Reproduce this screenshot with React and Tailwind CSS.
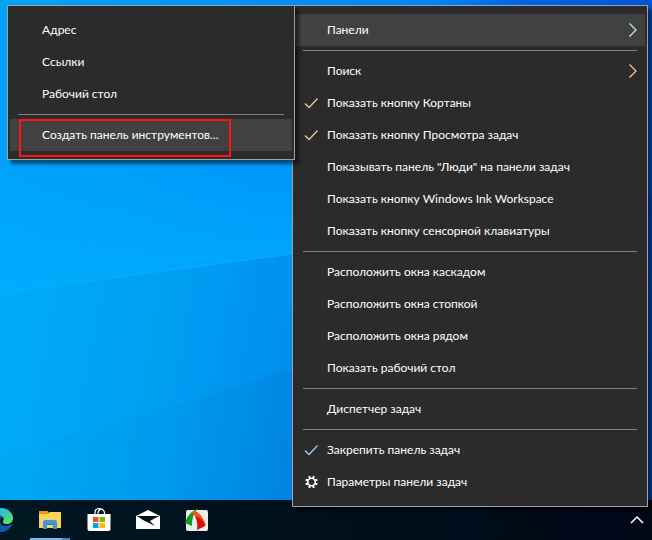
import clsx from 'clsx'

const toolbarItems = [
  { label: 'Адрес' },
  { label: 'Ссылки' },
  { label: 'Рабочий стол' },
  { separator: true },
  { label: 'Создать панель инструментов...', active: true, marked: true },
]

const taskbarItems = [
  { label: 'Панели', arrow: 'cool', active: true },
  { separator: true },
  { label: 'Поиск', arrow: 'warm' },
  { label: 'Показать кнопку Кортаны', icon: 'checkWarm' },
  { label: 'Показать кнопку Просмотра задач', icon: 'checkWarm' },
  { label: 'Показывать панель "Люди" на панели задач' },
  { label: 'Показать кнопку Windows Ink Workspace' },
  { label: 'Показать кнопку сенсорной клавиатуры' },
  { separator: true },
  { label: 'Расположить окна каскадом' },
  { label: 'Расположить окна стопкой' },
  { label: 'Расположить окна рядом' },
  { label: 'Показать рабочий стол' },
  { separator: true },
  { label: 'Диспетчер задач' },
  { separator: true },
  { label: 'Закрепить панель задач', icon: 'checkCool' },
  { label: 'Параметры панели задач', icon: 'gear' },
]

const Check = ({ color }) => (
  <svg className="h-4 w-4" viewBox="0 0 16 16" fill="none" stroke={color} strokeWidth="1.3">
    <path d="M2 8.5l4 4 8.5-9" />
  </svg>
)

const Gear = () => (
  <svg className="h-4 w-4" viewBox="0 0 16 16" fill="none" stroke="#fff">
    <circle cx="8.5" cy="8" r="3.7" strokeWidth="1.6" />
    <g strokeWidth="2">
      {[0, 45, 90, 135, 180, 225, 270, 315].map((angle) => (
        <path key={angle} d="M8.5 1.700v2.300" transform={`rotate(${angle + 22.5} 8.5 8)`} />
      ))}
    </g>
  </svg>
)

const MenuIcon = ({ name }) => {
  if (name === 'checkWarm') return <Check color="#e8cd98" />
  if (name === 'checkCool') return <Check color="#a9c8f2" />
  if (name === 'gear') return <Gear />
  return null
}

const Menu = ({ items, label, className, children }) => (
  <div
    role="menu"
    aria-label={label}
    className={clsx('absolute border border-[#a0a0a0] bg-[#2b2b2b] px-0.5 py-2 shadow-[4px_4px_3px_rgba(0,0,0,0.5)]', className)}
  >
    {items.map((item, index) =>
      item.separator ? (
        <hr key={index} className="mx-2 my-1 border-t border-[#808080]" />
      ) : (
        <button
          key={index}
          type="button"
          role="menuitem"
          className={clsx('relative flex h-8 w-full items-center text-left', item.active && 'bg-[#414141]')}
        >
          <span className="flex w-8 shrink-0 items-center pl-2">
            <MenuIcon name={item.icon} />
          </span>
          <span className="flex-1 whitespace-nowrap">{item.label}</span>
          {item.arrow && (
            <svg
              className="mr-1 h-4 w-4"
              viewBox="0 0 16 16"
              fill="none"
              stroke={item.arrow === 'cool' ? '#b9ecee' : '#f0c39a'}
              strokeWidth="1.3"
            >
              <path d="M4.500 1.500L11 8l-6.500 6.500" />
            </svg>
          )}
          {item.marked && (
            <span className="absolute top-0 -bottom-1.5 left-[9px] w-[212px] border-2 border-[#ff1414]" />
          )}
        </button>
      )
    )}
    {children}
  </div>
)

const Wallpaper = () => (
  <svg className="absolute inset-0 h-full w-full" viewBox="0 0 652 540" preserveAspectRatio="none" aria-hidden="true">
    <defs>
      <linearGradient id="sky" x1="0" y1="0" x2="652" y2="0" gradientUnits="userSpaceOnUse">
        <stop offset="0" stopColor="#00a2f8" />
        <stop offset="0.2" stopColor="#009bf8" />
        <stop offset="0.45" stopColor="#008df8" />
        <stop offset="0.65" stopColor="#0088fa" />
        <stop offset="0.8" stopColor="#0064e4" />
        <stop offset="1" stopColor="#0054d8" />
      </linearGradient>
      <linearGradient id="glow" x1="0" y1="150" x2="16" y2="290" gradientUnits="userSpaceOnUse">
        <stop offset="0" stopColor="#00b0ff" stopOpacity="0" />
        <stop offset="1" stopColor="#00b0ff" stopOpacity="0.7" />
      </linearGradient>
      <linearGradient id="ground" x1="0" y1="300" x2="652" y2="420" gradientUnits="userSpaceOnUse">
        <stop offset="0" stopColor="#00acf9" />
        <stop offset="0.25" stopColor="#009ff3" />
        <stop offset="0.45" stopColor="#008eee" />
        <stop offset="1" stopColor="#0040c0" />
      </linearGradient>
      <linearGradient id="floor" x1="0" y1="440" x2="652" y2="560" gradientUnits="userSpaceOnUse">
        <stop offset="0" stopColor="#00a9f4" />
        <stop offset="0.25" stopColor="#009aec" />
        <stop offset="0.45" stopColor="#0083e0" />
        <stop offset="1" stopColor="#003fb8" />
      </linearGradient>
    </defs>
    <path fill="url(#sky)" d="M0 0h652v540H0z" />
    <path fill="url(#glow)" d="M0 150h400v90L0 293z" />
    <path fill="url(#ground)" d="M0 293L292 254l360-58v344H0z" />
    <path fill="url(#floor)" d="M0 455L150 411l142-42 360-110v281H0z" />
    <path fill="none" stroke="#22b4ff" strokeOpacity="0.5" d="M0 293L292 254" />
    <path fill="none" stroke="#22a8ff" strokeOpacity="0.2" d="M0 455L150 411l142-42" />
  </svg>
)

const Edge = () => (
  <svg className="h-6 w-6" viewBox="0 0 24 24">
    <defs>
      <linearGradient id="edgeGreen" x1="0" y1="0" x2="1" y2="1">
        <stop offset="0" stopColor="#25b8dc" />
        <stop offset="0.5" stopColor="#35c8bc" />
        <stop offset="1" stopColor="#68ea49" />
      </linearGradient>
    </defs>
    <circle cx="12" cy="12" r="12" fill="#0b5cab" />
    <path fill="#001420" d="M12 10c-2 4 0 8 4 8 3 0 6-1 8-3l-1 4 1-7-8-4z" />
    <path fill="url(#edgeGreen)" d="M0 11C1 4 6 0 12 0c7 0 12 5 12 10 0 4-3 6-6 6-3 0-5-1-4-3 2-3-1-6-5-6-4 0-7 2-9 4z" />
  </svg>
)

const Explorer = () => (
  <svg className="h-6 w-6" viewBox="0 0 24 24">
    <path fill="#e5a000" d="M1 3h9l1 2v3H1z" />
    <path fill="#ffd35a" d="M1 6h9l2-2h11v16H1z" />
    <path fill="#3b99db" d="M5 14q0-2 2-2h10q2 0 2 2v7h-4v-5H9v5H5z" />
    <path fill="#287bb8" d="M9 16h6v1H9z" />
  </svg>
)

const Store = () => (
  <svg className="h-6 w-6" viewBox="0 0 24 24">
    <path fill="none" stroke="#fff" strokeWidth="1.2" d="M8 7V4.500Q8 1 12 .700q5 .300 5.500 4V7M11 7V5q0-2.500 3-4" />
    <path fill="#fff" d="M.500 6h23v15q0 2-2 2h-19q-2 0-2-2z" />
    <path fill="#f25022" d="M6 9h5.500v5H6z" />
    <path fill="#7fba00" d="M12.500 9H18v5h-5.500z" />
    <path fill="#00a4ef" d="M6 15h5.500v5H6z" />
    <path fill="#ffb900" d="M12.500 15H18v5h-5.500z" />
  </svg>
)

const Mail = () => (
  <svg className="h-6 w-6" viewBox="0 0 24 24">
    <path fill="#fff" d="M0 8l12-6 12 6v13H0z" />
    <path fill="#001420" d="M1 8h22l-9 5 5 5L7 12z" />
  </svg>
)

const Capture = () => (
  <svg className="h-6 w-6" viewBox="0 0 24 24">
    <rect x="1" y="2" width="22" height="21" rx="2" fill="#ececec" />
    <path fill="#159c1c" d="M13 0L7 4C3 7 1 11 0 15l7 3c0-6 1-9 2-12z" />
    <path fill="#f2521a" d="M6 4l4-1c5 2 9 8 11 14l-5 3c-1-6-5-12-10-16z" />
    <path fill="#d80c0c" d="M10 8c6 2 9 6 10 10l-8 4c1-5 0-10-2-14z" />
  </svg>
)

const apps = [
  { name: 'Microsoft Edge', Icon: Edge },
  { name: 'Проводник', Icon: Explorer, running: true },
  { name: 'Microsoft Store', Icon: Store },
  { name: 'Почта', Icon: Mail },
  { name: 'FastStone Capture', Icon: Capture },
]

export default function App() {
  return (
    <main className="relative flex min-h-screen flex-col overflow-hidden bg-[#0090f0] font-['Lato','Noto_Sans',sans-serif] text-xs text-white">
      <Wallpaper />
      <div className="flex-1" />
      <footer className="relative flex h-10 items-center justify-between bg-linear-to-r from-[#001721] to-[#000818]">
        <nav className="-ml-[19px] flex h-full gap-[9px]" aria-label="Панель задач">
          {apps.map(({ name, Icon, running }) => (
            <button key={name} type="button" aria-label={name} className="relative flex h-full w-10 items-center justify-center">
              <Icon />
              {running && (
                <span className="absolute inset-x-0 bottom-0 flex h-0.5">
                  <span className="flex-1 bg-[#76b9ed]" />
                  <span className="w-2 bg-[#4c86b4]" />
                </span>
              )}
            </button>
          ))}
        </nav>
        <button type="button" aria-label="Показать скрытые значки" className="mr-2 flex h-full items-center">
          <svg className="h-3.5 w-3.5" viewBox="0 0 14 14" fill="none" stroke="#fff" strokeWidth="1.5">
            <path d="M1 10l6-6 6 6" />
          </svg>
        </button>
      </footer>

      <Menu items={taskbarItems} label="Меню панели задач" className="right-1 bottom-[33px] w-[356px]">
        <Menu items={toolbarItems} label="Панели" className="-top-px right-full -mr-0.5 w-72" />
      </Menu>
    </main>
  )
}
